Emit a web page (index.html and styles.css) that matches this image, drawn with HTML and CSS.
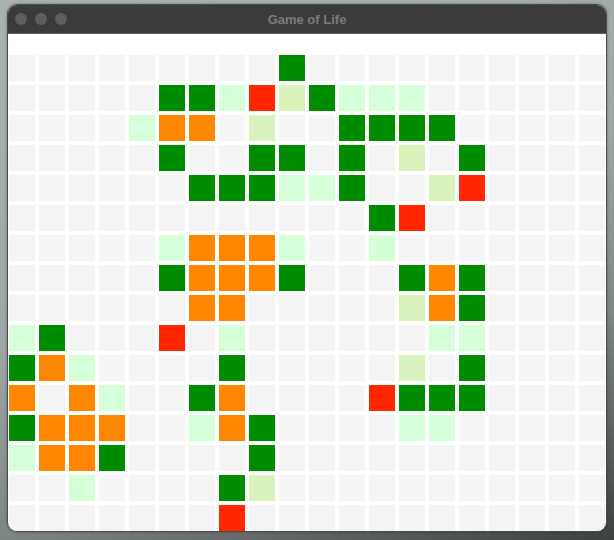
FILE: index.html
```html
<!DOCTYPE html>
<html>
<head>
<meta charset="utf-8">
<title>Game of Life</title>
<link rel="stylesheet" href="styles.css">
</head>
<body>
<div class="window">
  <div class="titlebar">
    <div class="lights"><span class="light"></span><span class="light"></span><span class="light"></span></div>
    <div class="title">Game of Life</div>
  </div>
  <div class="content">
    <div class="board">
      <i class="c"></i><i class="c"></i><i class="c"></i><i class="c"></i><i class="c"></i><i class="c"></i><i class="c"></i><i class="c"></i><i class="c"></i><i class="c g"></i><i class="c"></i><i class="c"></i><i class="c"></i><i class="c"></i><i class="c"></i><i class="c"></i><i class="c"></i><i class="c"></i><i class="c"></i><i class="c"></i>
      <i class="c"></i><i class="c"></i><i class="c"></i><i class="c"></i><i class="c"></i><i class="c g"></i><i class="c g"></i><i class="c l"></i><i class="c r"></i><i class="c y"></i><i class="c g"></i><i class="c l"></i><i class="c l"></i><i class="c l"></i><i class="c"></i><i class="c"></i><i class="c"></i><i class="c"></i><i class="c"></i><i class="c"></i>
      <i class="c"></i><i class="c"></i><i class="c"></i><i class="c"></i><i class="c l"></i><i class="c o"></i><i class="c o"></i><i class="c"></i><i class="c y"></i><i class="c"></i><i class="c"></i><i class="c g"></i><i class="c g"></i><i class="c g"></i><i class="c g"></i><i class="c"></i><i class="c"></i><i class="c"></i><i class="c"></i><i class="c"></i>
      <i class="c"></i><i class="c"></i><i class="c"></i><i class="c"></i><i class="c"></i><i class="c g"></i><i class="c"></i><i class="c"></i><i class="c g"></i><i class="c g"></i><i class="c"></i><i class="c g"></i><i class="c"></i><i class="c y"></i><i class="c"></i><i class="c g"></i><i class="c"></i><i class="c"></i><i class="c"></i><i class="c"></i>
      <i class="c"></i><i class="c"></i><i class="c"></i><i class="c"></i><i class="c"></i><i class="c"></i><i class="c g"></i><i class="c g"></i><i class="c g"></i><i class="c l"></i><i class="c l"></i><i class="c g"></i><i class="c"></i><i class="c"></i><i class="c y"></i><i class="c r"></i><i class="c"></i><i class="c"></i><i class="c"></i><i class="c"></i>
      <i class="c"></i><i class="c"></i><i class="c"></i><i class="c"></i><i class="c"></i><i class="c"></i><i class="c"></i><i class="c"></i><i class="c"></i><i class="c"></i><i class="c"></i><i class="c"></i><i class="c g"></i><i class="c r"></i><i class="c"></i><i class="c"></i><i class="c"></i><i class="c"></i><i class="c"></i><i class="c"></i>
      <i class="c"></i><i class="c"></i><i class="c"></i><i class="c"></i><i class="c"></i><i class="c l"></i><i class="c o"></i><i class="c o"></i><i class="c o"></i><i class="c l"></i><i class="c"></i><i class="c"></i><i class="c l"></i><i class="c"></i><i class="c"></i><i class="c"></i><i class="c"></i><i class="c"></i><i class="c"></i><i class="c"></i>
      <i class="c"></i><i class="c"></i><i class="c"></i><i class="c"></i><i class="c"></i><i class="c g"></i><i class="c o"></i><i class="c o"></i><i class="c o"></i><i class="c g"></i><i class="c"></i><i class="c"></i><i class="c"></i><i class="c g"></i><i class="c o"></i><i class="c g"></i><i class="c"></i><i class="c"></i><i class="c"></i><i class="c"></i>
      <i class="c"></i><i class="c"></i><i class="c"></i><i class="c"></i><i class="c"></i><i class="c"></i><i class="c o"></i><i class="c o"></i><i class="c"></i><i class="c"></i><i class="c"></i><i class="c"></i><i class="c"></i><i class="c y"></i><i class="c o"></i><i class="c g"></i><i class="c"></i><i class="c"></i><i class="c"></i><i class="c"></i>
      <i class="c l"></i><i class="c g"></i><i class="c"></i><i class="c"></i><i class="c"></i><i class="c r"></i><i class="c"></i><i class="c l"></i><i class="c"></i><i class="c"></i><i class="c"></i><i class="c"></i><i class="c"></i><i class="c"></i><i class="c l"></i><i class="c l"></i><i class="c"></i><i class="c"></i><i class="c"></i><i class="c"></i>
      <i class="c g"></i><i class="c o"></i><i class="c l"></i><i class="c"></i><i class="c"></i><i class="c"></i><i class="c"></i><i class="c g"></i><i class="c"></i><i class="c"></i><i class="c"></i><i class="c"></i><i class="c"></i><i class="c y"></i><i class="c"></i><i class="c g"></i><i class="c"></i><i class="c"></i><i class="c"></i><i class="c"></i>
      <i class="c o"></i><i class="c"></i><i class="c o"></i><i class="c l"></i><i class="c"></i><i class="c"></i><i class="c g"></i><i class="c o"></i><i class="c"></i><i class="c"></i><i class="c"></i><i class="c"></i><i class="c r"></i><i class="c g"></i><i class="c g"></i><i class="c g"></i><i class="c"></i><i class="c"></i><i class="c"></i><i class="c"></i>
      <i class="c g"></i><i class="c o"></i><i class="c o"></i><i class="c o"></i><i class="c"></i><i class="c"></i><i class="c l"></i><i class="c o"></i><i class="c g"></i><i class="c"></i><i class="c"></i><i class="c"></i><i class="c"></i><i class="c l"></i><i class="c l"></i><i class="c"></i><i class="c"></i><i class="c"></i><i class="c"></i><i class="c"></i>
      <i class="c l"></i><i class="c o"></i><i class="c o"></i><i class="c g"></i><i class="c"></i><i class="c"></i><i class="c"></i><i class="c"></i><i class="c g"></i><i class="c"></i><i class="c"></i><i class="c"></i><i class="c"></i><i class="c"></i><i class="c"></i><i class="c"></i><i class="c"></i><i class="c"></i><i class="c"></i><i class="c"></i>
      <i class="c"></i><i class="c"></i><i class="c l"></i><i class="c"></i><i class="c"></i><i class="c"></i><i class="c"></i><i class="c g"></i><i class="c y"></i><i class="c"></i><i class="c"></i><i class="c"></i><i class="c"></i><i class="c"></i><i class="c"></i><i class="c"></i><i class="c"></i><i class="c"></i><i class="c"></i><i class="c"></i>
      <i class="c"></i><i class="c"></i><i class="c"></i><i class="c"></i><i class="c"></i><i class="c"></i><i class="c"></i><i class="c r"></i><i class="c"></i><i class="c"></i><i class="c"></i><i class="c"></i><i class="c"></i><i class="c"></i><i class="c"></i><i class="c"></i><i class="c"></i><i class="c"></i><i class="c"></i><i class="c"></i>
    </div>
  </div>
</div>
</body>
</html>
```

FILE: styles.css
```css
html, body {
  margin: 0;
  padding: 0;
}
body {
  width: 614px;
  height: 540px;
  overflow: hidden;
  background: linear-gradient(160deg, #a9b3b1 0%, #9da8a6 45%, #7e8786 70%, #3d4241 100%);
  font-family: "Liberation Sans", Arial, sans-serif;
}
.window {
  margin: 4px 0 0 7px;
  width: 598px;
  border: 1px solid #4b4c4b;
  border-radius: 10px;
  overflow: hidden;
  background: #ffffff;
  box-shadow: 0 0 3px rgba(0, 0, 0, 0.35);
}
.titlebar {
  position: relative;
  height: 28px;
  background: #3a3b3a;
  border-bottom: 1px solid #5f605f;
  display: flex;
  align-items: center;
  justify-content: center;
}
.lights {
  position: absolute;
  left: 7px;
  top: 8px;
  display: flex;
  gap: 8px;
}
.light {
  width: 12px;
  height: 12px;
  border-radius: 50%;
  background: #5d5e5d;
}
.title {
  font-weight: bold;
  font-size: 13px;
  color: #7b7c7b;
  margin-top: 0;
}
.content {
  padding: 21px 1px 0 1px;
}
.board {
  display: grid;
  grid-template-columns: repeat(20, 26px);
  grid-auto-rows: 26px;
  gap: 4px;
}
.c {
  display: block;
  background: #f4f4f4;
}
.c.g { background: #008c00; }
.c.l { background: #d4ffd9; }
.c.r { background: #ff2600; }
.c.y { background: #d9f1bb; }
.c.o { background: #ff8600; }
```
